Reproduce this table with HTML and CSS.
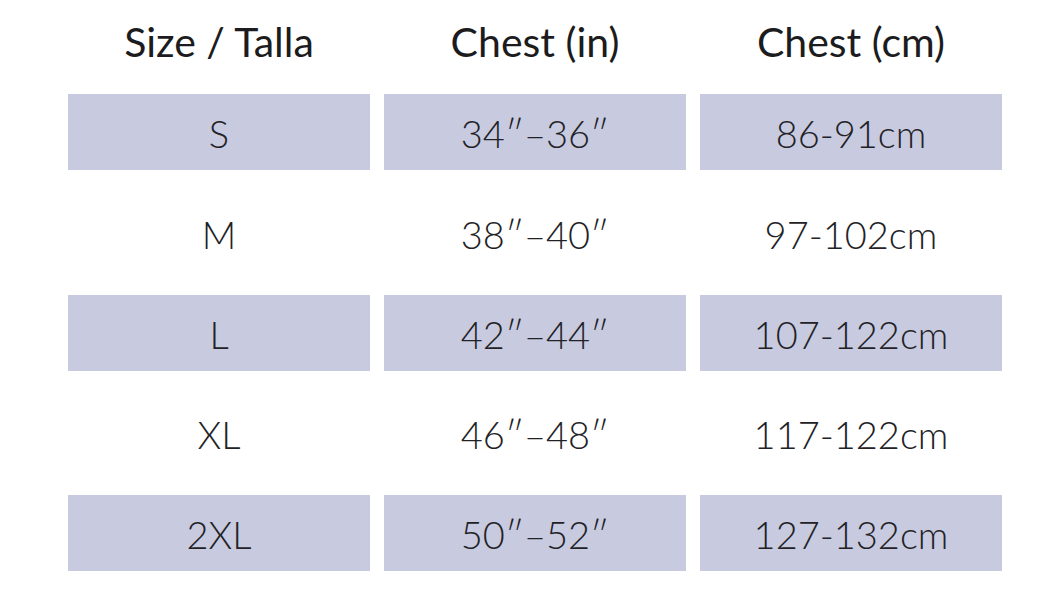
FILE: index.html
```html
<!DOCTYPE html>
<html>
<head>
<meta charset="utf-8">
<link rel="stylesheet" href="styles.css">
</head>
<body>
<div class="table">
  <div class="head">Size / Talla</div>
  <div class="head">Chest (in)</div>
  <div class="head">Chest (cm)</div>

  <div class="cell shade">S</div>
  <div class="cell shade">34″–36″</div>
  <div class="cell shade">86-91cm</div>

  <div class="cell">M</div>
  <div class="cell">38″–40″</div>
  <div class="cell">97-102cm</div>

  <div class="cell shade">L</div>
  <div class="cell shade">42″–44″</div>
  <div class="cell shade">107-122cm</div>

  <div class="cell">XL</div>
  <div class="cell">46″–48″</div>
  <div class="cell">117-122cm</div>

  <div class="cell shade">2XL</div>
  <div class="cell shade">50″–52″</div>
  <div class="cell shade">127-132cm</div>
</div>
</body>
</html>
```

FILE: styles.css
```css
html, body {
  margin: 0;
  padding: 0;
  background: #ffffff;
}
body {
  font-family: "Lato", "Noto Sans", sans-serif;
  color: #222226;
  width: 1046px;
  height: 589px;
  overflow: hidden;
}
.table {
  display: grid;
  grid-template-columns: 302px 302px 302px;
  grid-template-rows: 70px repeat(5, 76px);
  column-gap: 14px;
  row-gap: 24.25px;
  padding-left: 68px;
}
.head {
  display: flex;
  align-items: center;
  justify-content: center;
  font-size: 41px;
  font-weight: 400;
  color: #1c1c20;
  padding-top: 12px;
}
.cell {
  display: flex;
  align-items: center;
  justify-content: center;
  font-size: 38px;
  font-weight: 300;
  padding-top: 2px;
}
.shade {
  background: #c8cae0;
}
```
